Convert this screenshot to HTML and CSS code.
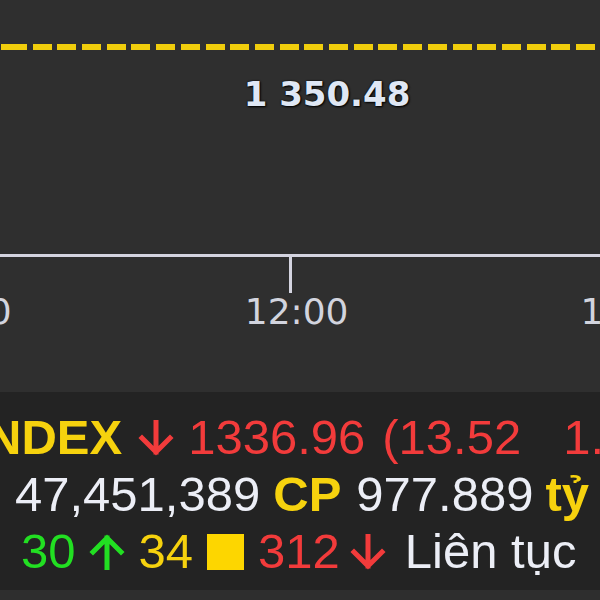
FILE: index.html
```html
<!DOCTYPE html>
<html lang="vi">
<head>
  <meta charset="UTF-8">
  <meta name="viewport" content="width=device-width, initial-scale=1.0">
  <title>VN-INDEX</title>
  <link rel="stylesheet" href="styles.css">
</head>
<body>
  <!-- Vung bieu do -->
  <div class="chart">
    <div class="ref-line"></div>
    <div class="ref-label"><span>1 350.48</span></div>
    <div class="axis">
      <div class="axis-line"></div>
      <div class="ticks"><div class="tick"></div></div>
      <div class="axis-labels">
        <span class="lbl lbl-left">11:00</span>
        <span class="lbl lbl-mid">12:00</span>
        <span class="lbl lbl-right">13:00</span>
      </div>
    </div>
  </div>
  <!-- Thong tin chi so -->
  <div class="info">
    <div class="row">
      <span class="yellow bold name">VN-INDEX</span>
      <svg class="arrow red-arrow a1" viewBox="0 0 36 36"><path d="M18 2 V32 M4 18 L18 32 L32 18"/></svg>
      <span class="red val">1336.96</span>
      <span class="red chg">(13.52</span>
      <span class="red pct">1.00%)</span>
    </div>
    <div class="row">
      <span class="white vol">47,451,389</span>
      <span class="yellow bold unit">CP</span>
      <span class="white amt">977.889</span>
      <span class="yellow bold unit2">tỷ</span>
    </div>
    <div class="row">
      <span class="green up">30</span>
      <svg class="arrow green-arrow a2" viewBox="0 0 36 36"><path d="M18 34 V4 M4 18 L18 4 L32 18"/></svg>
      <span class="yellow ref">34</span>
      <span class="square"></span>
      <span class="red down">312</span>
      <svg class="arrow red-arrow a3" viewBox="0 0 36 36"><path d="M18 2 V32 M4 18 L18 32 L32 18"/></svg>
      <span class="white status">Liên tục</span>
    </div>
  </div>
  <div class="foot"></div>
</body>
</html>
```

FILE: styles.css
```css
* {
  box-sizing: border-box;
  margin: 0;
  padding: 0;
}
body {
  width: 600px;
  height: 600px;
  overflow: hidden;
  background: #2e2e2e;
  font-family: "Liberation Sans", Arial, sans-serif;
}
/* Bieu do */
.chart {
  height: 392px;
  background: #2f2f2f;
  padding-top: 44px;
  display: flex;
  flex-direction: column;
  overflow: hidden;
}
.ref-line {
  height: 6px;
  background: repeating-linear-gradient(90deg, #f0cd0c 0 19px, transparent 19px 24.7px);
  background-position: 8px 0;
}
.ref-label {
  margin-top: 28px;
  padding-left: 54px;
  display: flex;
  justify-content: center;
  font-family: "DejaVu Sans", sans-serif;
  font-weight: bold;
  font-size: 34px;
  line-height: 33px;
  color: #dfe7f4;
  text-shadow: 0 0 2px #000, 1px 1px 2px #000;
}
.axis {
  margin-top: auto;
  margin-bottom: 62px;
}
.axis-line {
  height: 3px;
  background: #d4d4e0;
}
.ticks {
  height: 37px;
  padding-left: 289px;
}
.tick {
  width: 3px;
  height: 36px;
  background: #d4d4e0;
}
.axis-labels {
  display: flex;
  white-space: nowrap;
  font-family: "DejaVu Sans", sans-serif;
  font-size: 36px;
  line-height: 36px;
  color: #d2d4de;
}
.lbl { flex-shrink: 0; }
.lbl-left { margin-left: -92px; }
.lbl-mid { margin-left: 233px; }
.lbl-right { margin-left: 232px; }
/* Bang thong tin */
.info {
  height: 198px;
  background: #232323;
  padding-top: 17px;
  font-size: 49px;
  line-height: 57px;
  white-space: nowrap;
  overflow: hidden;
}
.row {
  display: flex;
  align-items: baseline;
}
.row > * { flex-shrink: 0; }
.bold { font-weight: bold; }
.yellow { color: #f6d20e; }
.red { color: #f23b3b; }
.green { color: #22df22; }
.white { color: #eceef6; }
.arrow {
  width: 36px;
  height: 36px;
  fill: none;
  stroke-width: 5;
  stroke-linecap: square;
  align-self: center;
}
.red-arrow { stroke: #f23b3b; }
.green-arrow { stroke: #22df22; }
.name { margin-left: -112px; }
.a1 { margin-left: 16px; }
.val { margin-left: 14px; }
.chg { margin-left: 17px; }
.pct { margin-left: 42px; }
.vol { margin-left: 15px; }
.unit { margin-left: 13px; }
.amt { margin-left: 15px; }
.unit2 { margin-left: 12px; }
.up { margin-left: 21px; }
.a2 { margin-left: 13px; }
.ref { margin-left: 14px; }
.square {
  width: 37px;
  height: 36px;
  margin-left: 14px;
  background: #fdd600;
  align-self: center;
}
.down { margin-left: 14px; }
.a3 { margin-left: 10px; }
.status { margin-left: 19px; }
.foot {
  height: 10px;
  background: #2e2e2e;
}
```
